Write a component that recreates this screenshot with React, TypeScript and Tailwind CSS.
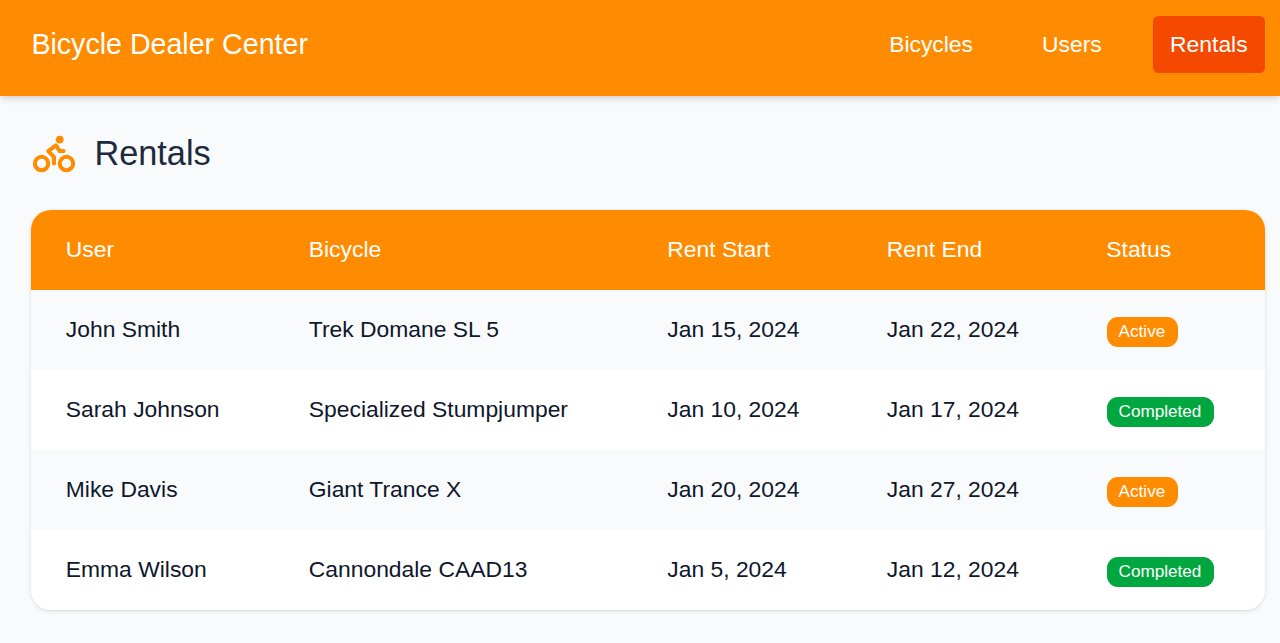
const rows = [
  ["John Smith", "Trek Domane SL 5", "Jan 15, 2024", "Jan 22, 2024", "Active"],
  ["Sarah Johnson", "Specialized Stumpjumper", "Jan 10, 2024", "Jan 17, 2024", "Completed"],
  ["Mike Davis", "Giant Trance X", "Jan 20, 2024", "Jan 27, 2024", "Active"],
  ["Emma Wilson", "Cannondale CAAD13", "Jan 5, 2024", "Jan 12, 2024", "Completed"],
];

const grid = "grid h-20 grid-cols-[243px_358.5px_219.5px_219.5px_1fr] items-center pb-0.5 pl-[34.4px]";

export default function App() {
  return (
    <div className="min-h-[643px] bg-[#f8fafc] font-['Liberation_Sans',Arial,sans-serif] text-[22.86px] text-[#0f172b]">
      <header className="flex h-24 items-start justify-between bg-[#ff8c00] pl-[31.4px] pr-[15.4px] pt-4 text-white shadow-[0_4px_8px_-1px_rgba(0,0,0,0.12),0_2px_5px_-2px_rgba(0,0,0,0.12)]">
        <h1 className="text-[28.6px] leading-[57px]">Bicycle Dealer Center</h1>
        <nav className="flex leading-[57px]">
          <a className="mr-[35px] px-[17px]">Bicycles</a>
          <a className="mr-[34.4px] px-[17px]">Users</a>
          <a className="rounded-[5.5px] bg-[#f54900] px-[17px]">Rentals</a>
        </nav>
      </header>
      <main className="pl-[31.4px] pr-[15.4px] pt-[34px]">
        <div className="flex h-[46px] items-center">
          <svg className="h-[46px] w-[46px]" viewBox="0 0 24 24" fill="none" stroke="#ff8c00" strokeWidth="2.1" strokeLinecap="round" strokeLinejoin="round">
            <circle cx="18.5" cy="17.5" r="3.5" />
            <circle cx="5.5" cy="17.5" r="3.5" />
            <circle cx="15" cy="5" r="1" />
            <path d="M12 17.5V14l-3-3 4-3 2 3h2" />
          </svg>
          <h2 className="ml-[17px] mt-px text-[34.3px] text-[#1d293d]">Rentals</h2>
        </div>
        <section className="mt-[34px] overflow-hidden rounded-[20px] bg-white shadow-[0_1px_4px_rgba(0,0,0,0.1),0_1px_3px_-1px_rgba(0,0,0,0.1)]">
          <div className={`${grid} bg-[#ff8c00] text-white`}>
            <span>User</span><span>Bicycle</span><span>Rent Start</span><span>Rent End</span><span>Status</span>
          </div>
          {rows.map((r, i) => (
            <div key={r[0]} className={`${grid} ${i % 2 ? "bg-white" : "bg-[#f8fafc]"}`}>
              <span>{r[0]}</span><span>{r[1]}</span><span>{r[2]}</span><span>{r[3]}</span>
              <span className={`ml-[0.3px] mt-[6px] h-[30px] w-fit rounded-[11px] pl-3 pr-[12.4px] text-[17.14px] leading-[29px] text-white ${r[4] === "Active" ? "bg-[#ff8c00]" : "bg-[#00a63e]"}`}>{r[4]}</span>
            </div>
          ))}
        </section>
      </main>
    </div>
  );
}
